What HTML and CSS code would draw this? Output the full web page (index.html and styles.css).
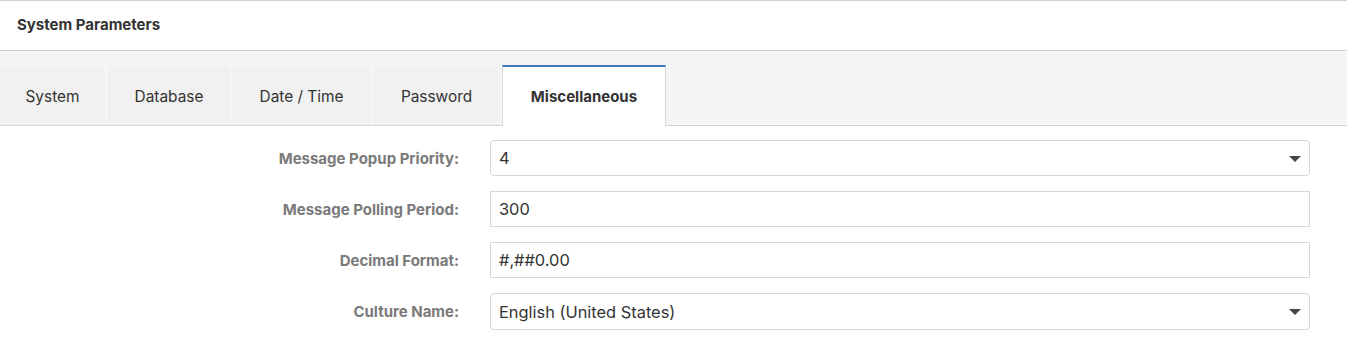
FILE: index.html
```html
<!DOCTYPE html>
<html lang="en">
<head>
  <meta charset="UTF-8">
  <title>System Parameters</title>
  <link rel="stylesheet" href="styles.css">
</head>
<body>
  <!-- Panel header -->
  <header class="panel-head">
    <h2>System Parameters</h2>
  </header>

  <!-- Tabs -->
  <nav class="tabs">
    <div class="tab tab-system">System</div>
    <div class="tab tab-db">Database</div>
    <div class="tab tab-date">Date / Time</div>
    <div class="tab tab-pwd">Password</div>
    <div class="tab tab-misc active">Miscellaneous</div>
  </nav>

  <!-- Form -->
  <form class="form">
    <label class="label">Message Popup Priority:</label>
    <div class="field select">4<span class="caret"></span></div>

    <label class="label">Message Polling Period:</label>
    <div class="field">300</div>

    <label class="label">Decimal Format:</label>
    <div class="field">#,##0.00</div>

    <label class="label">Culture Name:</label>
    <div class="field select tall">English (United States)<span class="caret"></span></div>
  </form>
</body>
</html>
```

FILE: styles.css
```css
* { box-sizing: border-box; margin: 0; padding: 0; }
body {
  font-family: Inter, "Noto Sans", sans-serif;
  background: #fff;
  color: #333;
  border-top: 1px solid #d0d0d0;
}

/* Header */
.panel-head {
  height: 50px;
  display: flex;
  align-items: center;
  padding-left: 17px;
  border-bottom: 1px solid #cfcfcf;
}
.panel-head h2 {
  font-size: 15px;
  font-weight: 700;
  color: #333;
  margin-top: -2px;
}

/* Tabs */
.tabs {
  display: flex;
  gap: 3px;
  background: #f5f5f5;
  padding-top: 15px;
  border-bottom: 1px solid #d4d4d4;
}
.tab {
  height: 59px;
  display: flex;
  align-items: center;
  justify-content: center;
  padding-top: 2px;
  font-size: 15.4px;
  color: #333;
  background: #f1f1f1;
}
.tab-system { width: 105px; }
.tab-db { width: 122px; }
.tab-date { width: 137px; }
.tab-pwd { width: 127px; }
.tab.active {
  width: 164px;
  background: #fff;
  font-size: 15px;
  font-weight: 700;
  border-top: 2px solid #3d78c0;
  border-left: 1px solid #d8d8d8;
  border-right: 1px solid #d8d8d8;
  margin-left: -1px;
  margin-bottom: -1px;
  height: 61px;
  margin-top: -1px;
  padding-top: 0;
}

/* Form */
.form {
  display: grid;
  grid-template-columns: 459px 1fr;
  column-gap: 31px;
  row-gap: 15px;
  padding: 14px 37px 0 0;
}
.label {
  justify-self: end;
  align-self: center;
  font-size: 15px;
  font-weight: 700;
  color: #7a7a7a;
}
.field {
  position: relative;
  height: 36px;
  display: flex;
  align-items: center;
  padding-left: 8px;
  border: 1px solid #d6d6d6;
  font-size: 16.4px;
  color: #333;
}
.field.select { border-radius: 4px; }
.field.tall { height: 37px; }
.caret {
  position: absolute;
  right: 8px;
  top: 15px;
  width: 0;
  height: 0;
  border-left: 6px solid transparent;
  border-right: 6px solid transparent;
  border-top: 6px solid #444;
}
```
